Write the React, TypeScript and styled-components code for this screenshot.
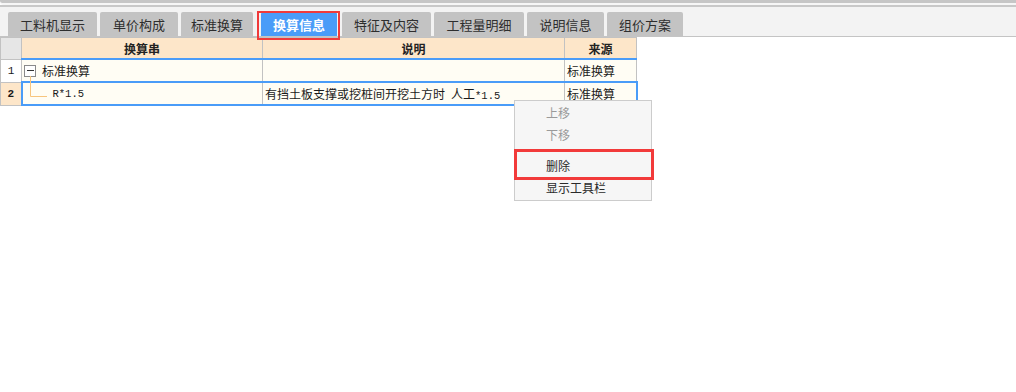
import * as React from 'react';
import styled, { createGlobalStyle } from 'styled-components';

const cjk = '"Noto Sans CJK SC", "Microsoft YaHei", sans-serif';
const mono = '"Liberation Mono", "DejaVu Sans Mono", monospace';

const GlobalStyle = createGlobalStyle`
  html, body {
    margin: 0;
    padding: 0;
    background: #ffffff;
    font-family: ${cjk};
  }
`;

const Page = styled.div`
  position: relative;
  width: 1016px;
  height: 392px;
  overflow: hidden;
  background: #ffffff;
`;

const Chrome = styled.div`
  height: 3px;
  background: #c6c6c6;
  border-bottom-left-radius: 4px;
  border-bottom: 2px solid #f6f6f6;
`;

const TabBar = styled.div`
  display: flex;
  align-items: flex-end;
  gap: 3px;
  height: 29px;
  padding-left: 8px;
  background: #f3f3f3;
  border-top: 2px solid #c8c8c8;
  border-bottom: 1px solid #c4c4c4;
`;

const Tab = styled.div<{ $active?: boolean; $w: number }>`
  position: relative;
  display: flex;
  align-items: center;
  justify-content: center;
  width: ${(p) => p.$w}px;
  height: 24px;
  margin: ${(p) => (p.$active ? '0 2px 0 5px' : '0')};
  border-radius: 2px 2px 0 0;
  background: ${(p) => (p.$active ? '#4a9cf8' : '#c3c3c3')};
  color: ${(p) => (p.$active ? '#ffffff' : '#2e2e2e')};
  font-size: 13px;
  font-weight: ${(p) => (p.$active ? 600 : 400)};
  ${(p) =>
    p.$active &&
    `
    &::after {
      content: '';
      position: absolute;
      left: -4px;
      right: -3px;
      top: -1px;
      bottom: -4px;
      border: 2px solid #f03a3a;
      z-index: 2;
    }
  `}
`;

const Grid = styled.table`
  border-collapse: collapse;
  table-layout: fixed;
  font-size: 12px;
  color: #1a1a1a;
`;

const HeadCell = styled.th<{ $w: number; $corner?: boolean }>`
  width: ${(p) => p.$w}px;
  height: 20px;
  padding: 0;
  background: ${(p) => (p.$corner ? '#e6e6e6' : '#fde6c9')};
  border: 1px solid #c2c2c2;
  border-bottom: ${(p) => (p.$corner ? '1px solid #c2c2c2' : '2px solid #4a9cf8')};
  font-weight: 700;
  text-align: center;
  color: #222;
`;

const NumCell = styled.td<{ $sel?: boolean }>`
  height: 21px;
  padding: 0;
  text-align: center;
  background: ${(p) => (p.$sel ? '#fde6c9' : '#ffffff')};
  border: 1px solid #c2c2c2;
  font-family: ${mono};
  font-size: 11px;
  font-weight: ${(p) => (p.$sel ? 700 : 400)};
`;

const Cell = styled.td<{ $sel?: boolean; $first?: boolean; $last?: boolean }>`
  height: 21px;
  padding: 0 0 0 2px;
  background: #fffdf4;
  border: 1px solid #c2c2c2;
  white-space: nowrap;
  overflow: visible;
  ${(p) =>
    p.$sel &&
    `
    border-top: 2px solid #4a9cf8;
    border-bottom: 2px solid #4a9cf8;
  `}
  ${(p) => p.$sel && p.$first && 'border-left: 2px solid #4a9cf8;'}
  ${(p) => p.$sel && p.$last && 'border-right: 2px solid #4a9cf8;'}
`;

const TreeLine = styled.div`
  position: relative;
  display: flex;
  align-items: center;
  gap: 6px;
`;

const Expander = styled.span`
  display: inline-flex;
  align-items: center;
  justify-content: center;
  width: 10px;
  height: 10px;
  border: 1px solid #8a8a8a;
  background: #fff;
  &::before {
    content: '';
    width: 7px;
    height: 1px;
    background: #333;
  }
`;

const Elbow = styled.svg`
  position: absolute;
  left: 0;
  top: -17px;
  overflow: visible;
`;

const Mono = styled.span<{ $gap?: boolean }>`
  font-family: ${mono};
  font-size: 10.5px;
  margin-left: ${(p) => (p.$gap ? '0' : '0')};
`;

const Spacer = styled.span`
  display: inline-block;
  width: 6px;
`;

const Menu = styled.div`
  position: absolute;
  left: 514px;
  top: 100px;
  width: 136px;
  padding: 1px 0;
  background: #f6f6f6;
  border: 1px solid #cccccc;
  font-size: 12px;
`;

const MenuItem = styled.div<{ $disabled?: boolean; $marked?: boolean }>`
  position: relative;
  height: 22px;
  line-height: 22px;
  padding-left: 31px;
  color: ${(p) => (p.$disabled ? '#9a9a9a' : '#2a2a2a')};
  ${(p) =>
    p.$marked &&
    `
    &::after {
      content: '';
      position: absolute;
      left: -1px;
      right: -3px;
      top: -6px;
      bottom: -3px;
      border: 3px solid #f23a3a;
    }
  `}
`;

const Separator = styled.div`
  height: 9px;
`;

const tabs = [
  { label: '工料机显示', w: 89 },
  { label: '单价构成', w: 78 },
  { label: '标准换算', w: 72 },
  { label: '换算信息', w: 76, active: true },
  { label: '特征及内容', w: 89 },
  { label: '工程量明细', w: 90 },
  { label: '说明信息', w: 77 },
  { label: '组价方案', w: 76 },
];

export default function App() {
  return (
    <Page>
      <GlobalStyle />
      <Chrome />
      <TabBar>
        {tabs.map((t) => (
          <Tab key={t.label} $w={t.w} $active={t.active}>
            {t.label}
          </Tab>
        ))}
      </TabBar>
      <Grid>
        <thead>
          <tr>
            <HeadCell $w={20} $corner />
            <HeadCell $w={240}>换算串</HeadCell>
            <HeadCell $w={301}>说明</HeadCell>
            <HeadCell $w={71}>来源</HeadCell>
          </tr>
        </thead>
        <tbody>
          <tr>
            <NumCell>1</NumCell>
            <Cell>
              <TreeLine>
                <Expander />
                标准换算
              </TreeLine>
            </Cell>
            <Cell />
            <Cell>标准换算</Cell>
          </tr>
          <tr>
            <NumCell $sel>2</NumCell>
            <Cell $sel $first>
              <TreeLine style={{ paddingLeft: 28 }}>
                <Elbow width="24" height="28">
                  <path d="M5.5 5 V25.5 H22" fill="none" stroke="#f7c57e" strokeWidth="1" />
                </Elbow>
                <Mono>R*1.5</Mono>
              </TreeLine>
            </Cell>
            <Cell $sel>
              有挡土板支撑或挖桩间开挖土方时<Spacer />人工<Mono>*1.5</Mono>
            </Cell>
            <Cell $sel $last>
              标准换算
            </Cell>
          </tr>
        </tbody>
      </Grid>
      <Menu>
        <MenuItem $disabled>上移</MenuItem>
        <MenuItem $disabled>下移</MenuItem>
        <Separator />
        <MenuItem $marked>删除</MenuItem>
        <MenuItem>显示工具栏</MenuItem>
      </Menu>
    </Page>
  );
}
